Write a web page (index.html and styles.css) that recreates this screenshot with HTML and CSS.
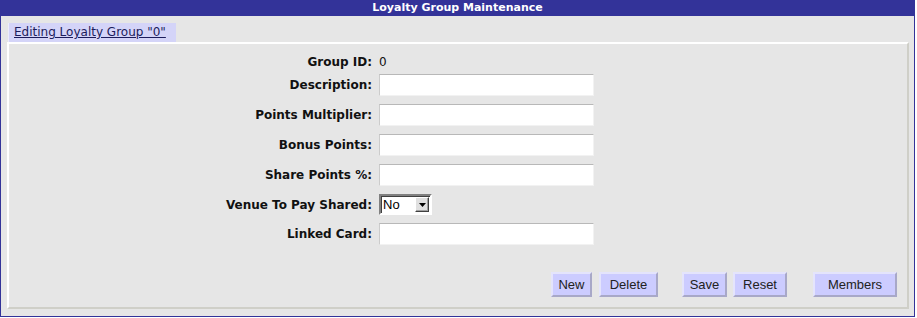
FILE: index.html
```html
<!DOCTYPE html>
<html lang="en">
<head>
    <meta charset="UTF-8">
    <title>Loyalty Group Maintenance</title>
    <link rel="stylesheet" href="styles.css">
</head>
<body>
    <div class="window">
        <div class="title-bar">Loyalty Group Maintenance</div>

        <div class="tabs">
            <a href="#" class="tab">Editing Loyalty Group "0"</a>
        </div>

        <div class="panel">
            <div class="row row-id">
                <label class="label">Group ID:</label>
                <span class="value">0</span>
            </div>
            <div class="row">
                <label class="label" for="description">Description:</label>
                <input type="text" id="description" class="field">
            </div>
            <div class="row">
                <label class="label" for="multiplier">Points Multiplier:</label>
                <input type="text" id="multiplier" class="field">
            </div>
            <div class="row">
                <label class="label" for="bonus">Bonus Points:</label>
                <input type="text" id="bonus" class="field">
            </div>
            <div class="row">
                <label class="label" for="share">Share Points %:</label>
                <input type="text" id="share" class="field">
            </div>
            <div class="row">
                <label class="label" for="venuePays">Venue To Pay Shared:</label>
                <div class="select-box">
                    <select id="venuePays" class="select">
                        <option>No</option>
                        <option>Yes</option>
                    </select>
                    <span class="select-btn">
                        <svg width="7" height="4" viewBox="0 0 7 4"><path d="M0 0h7L3.5 4z" fill="#000"/></svg>
                    </span>
                </div>
            </div>
            <div class="row">
                <label class="label" for="linkedCard">Linked Card:</label>
                <input type="text" id="linkedCard" class="field">
            </div>

            <div class="actions">
                <button class="btn btn-new">New</button>
                <button class="btn btn-delete">Delete</button>
                <button class="btn btn-save">Save</button>
                <button class="btn btn-reset">Reset</button>
                <button class="btn btn-members">Members</button>
            </div>
        </div>
    </div>
</body>
</html>
```

FILE: styles.css
```css
* {
    box-sizing: border-box;
    margin: 0;
    padding: 0;
}

body {
    font-family: "DejaVu Sans", Verdana, sans-serif;
    font-size: 12px;
    background: #ffffff;
}

.window {
    width: 915px;
    height: 317px;
    border: 1px solid #333399;
    border-top: none;
    background: #e6e6e6;
}

.title-bar {
    height: 16px;
    background-color: #333399;
    color: white;
    font-weight: bold;
    font-size: 11px;
    line-height: 16px;
    text-align: center;
}

.tabs {
    display: flex;
    padding: 7px 0 0 7px;
}

.tab {
    display: block;
    height: 19px;
    padding: 0 10px 0 5px;
    background-color: #d4d4f8;
    color: #1c1c5c;
    font-size: 12px;
    line-height: 19px;
    text-decoration: underline;
    border-left: 1px solid #ececfc;
}

.panel {
    margin-left: 6px;
    width: 902px;
    height: 267px;
    border: 2px solid #ffffff;
    border-right-color: #cfcfc8;
    border-bottom-color: #cfcfc8;
    padding-top: 10px;
}

.row {
    display: flex;
    align-items: center;
    margin-bottom: 8px;
}

.row-id {
    height: 16px;
    margin-bottom: 4px;
}

.label {
    width: 363px;
    text-align: right;
    font-weight: bold;
    color: #111111;
    margin-right: 7px;
}

.value {
    color: #111111;
}

.field {
    width: 215px;
    height: 22px;
    background: #ffffff;
    border: 1px solid #f2f2f2;
    border-top-color: #b8b8b8;
    border-left-color: #cccccc;
    font-family: "Liberation Sans", Arial, sans-serif;
    font-size: 13px;
}

.select-box {
    display: flex;
    align-items: center;
    width: 53px;
    height: 21px;
    background: #ffffff;
    border: 2px solid #ffffff;
    border-top-color: #808080;
    border-left-color: #808080;
    box-shadow: inset 1px 1px 0 #404040;
}

.select {
    appearance: none;
    -webkit-appearance: none;
    border: none;
    background: transparent;
    width: 34px;
    padding-left: 2px;
    font-family: "Liberation Sans", Arial, sans-serif;
    font-size: 13px;
    color: #000000;
    outline: none;
}

.select-btn {
    display: flex;
    align-items: center;
    justify-content: center;
    width: 14px;
    height: 15px;
    background: #e0e0e0;
    border: 1px solid #ffffff;
    border-right-color: #404040;
    border-bottom-color: #404040;
    box-shadow: inset -1px -1px 0 #a0a0a0;
}

.actions {
    display: flex;
    margin-top: 27px;
    padding-left: 542px;
}

.btn {
    height: 25px;
    background-color: #ccccff;
    border: 2px solid #e4e4fc;
    border-right-color: #a8a8c8;
    border-bottom-color: #a8a8c8;
    color: #222222;
    font-family: "Liberation Sans", Arial, sans-serif;
    font-size: 13px;
    cursor: pointer;
}

.btn-new {
    width: 41px;
    margin-right: 7px;
}

.btn-delete {
    width: 59px;
    margin-right: 24px;
}

.btn-save {
    width: 45px;
    margin-right: 6px;
}

.btn-reset {
    width: 54px;
    margin-right: 26px;
}

.btn-members {
    width: 84px;
}
```
